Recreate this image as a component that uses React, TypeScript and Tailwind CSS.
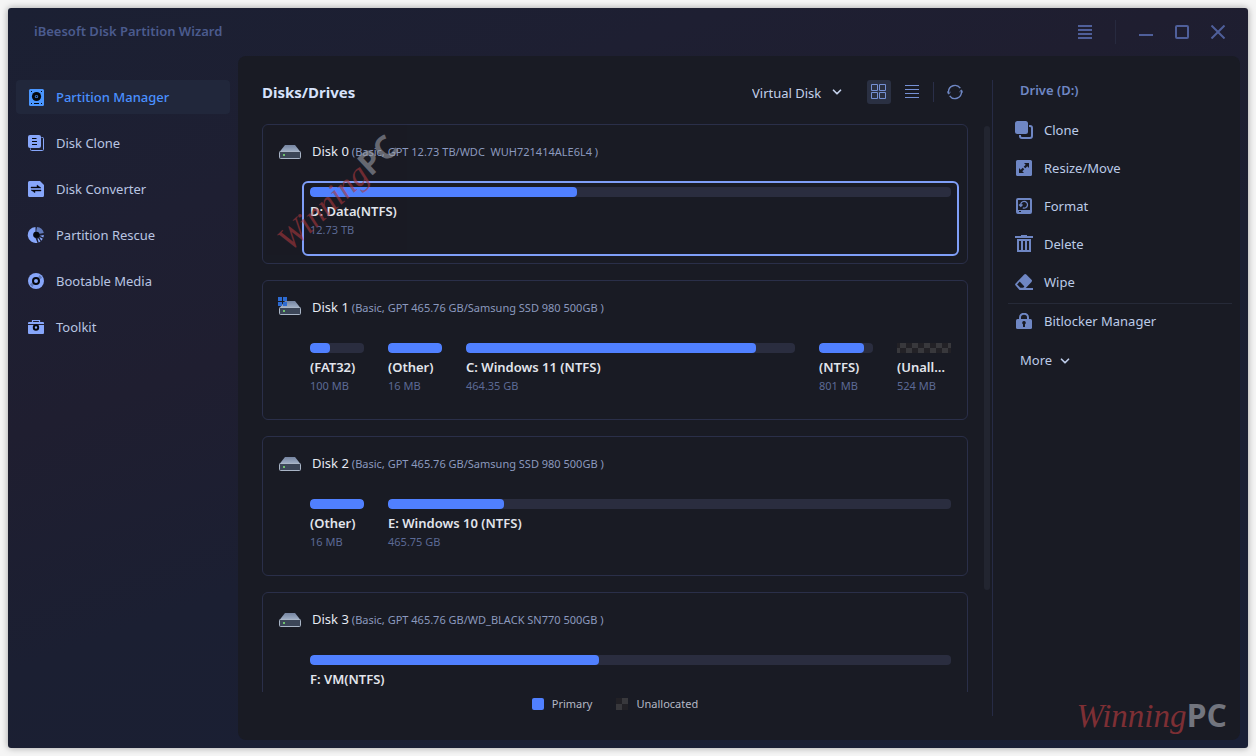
import type { ReactNode } from "react";
import { useState } from "react";
import clsx from "clsx";
import { ChevronDown } from "lucide-react";

type Partition = {
  name: string;
  size: string;
  used: number;
  small?: boolean;
  unallocated?: boolean;
};

type Disk = {
  name: string;
  info: string;
  system?: boolean;
  partitions: Partition[];
};

const DISKS: Disk[] = [
  {
    name: "Disk 0",
    info: "(Basic, GPT 12.73 TB/WDC  WUH721414ALE6L4 )",
    partitions: [{ name: "D: Data(NTFS)", size: "12.73 TB", used: 41.7 }],
  },
  {
    name: "Disk 1",
    info: "(Basic, GPT 465.76 GB/Samsung SSD 980 500GB )",
    system: true,
    partitions: [
      { name: "(FAT32)", size: "100 MB", used: 37.5, small: true },
      { name: "(Other)", size: "16 MB", used: 100, small: true },
      { name: "C: Windows 11 (NTFS)", size: "464.35 GB", used: 88 },
      { name: "(NTFS)", size: "801 MB", used: 83, small: true },
      { name: "(Unallocated)", size: "524 MB", used: 0, small: true, unallocated: true },
    ],
  },
  {
    name: "Disk 2",
    info: "(Basic, GPT 465.76 GB/Samsung SSD 980 500GB )",
    partitions: [
      { name: "(Other)", size: "16 MB", used: 100, small: true },
      { name: "E: Windows 10 (NTFS)", size: "465.75 GB", used: 20.6 },
    ],
  },
  {
    name: "Disk 3",
    info: "(Basic, GPT 465.76 GB/WD_BLACK SN770 500GB )",
    partitions: [{ name: "F: VM(NTFS)", size: "465.76 GB", used: 45.1 }],
  },
];

const CHECKER =
  "bg-[repeating-conic-gradient(#38383c_0_25%,#222126_0_50%)] bg-[length:12px_10px] bg-[position:-3px_0px]";

function Icon({ children, size = 16 }: { children: ReactNode; size?: number }) {
  return (
    <svg
      width={size}
      height={size}
      viewBox={`0 0 ${size} ${size}`}
      fill="none"
      className="shrink-0"
      aria-hidden="true"
    >
      {children}
    </svg>
  );
}

const NAV = [
  {
    label: "Partition Manager",
    icon: (
      <Icon size={18}>
        <rect x="2" y="1" width="15" height="17" rx="1.5" fill="#4a96ff" />
        <circle cx="9.5" cy="8.5" r="4.6" fill="#05070d" />
        <circle cx="9.5" cy="8.5" r="1.6" fill="#4a96ff" />
        <path d="M9.5 7.6v1.8M8.6 8.5h1.8" stroke="#05070d" strokeWidth=".8" />
        <path d="M7 15.5h5" stroke="#05070d" />
        <path d="M4 3h1v1H4zM14 3h1v1h-1zM4 15h1v1H4zM14 15h1v1h-1z" fill="#05070d" />
      </Icon>
    ),
  },
  {
    label: "Disk Clone",
    icon: (
      <Icon size={18}>
        <path d="M14.5 3.5h1a1 1 0 0 1 1 1v11a1 1 0 0 1-1 1h-11a1 1 0 0 1-1-1v-1" stroke="#87a6fa" />
        <rect x="1" y="1" width="13" height="13" rx="2" fill="#87a6fa" />
        <path d="M5 4.5h4.500M5 7.500h5M5 10.500h5" stroke="#05070d" />
      </Icon>
    ),
  },
  {
    label: "Disk Converter",
    icon: (
      <Icon size={18}>
        <path d="M2.500 1H13l4 4v10.500a1.500 1.500 0 0 1-1.500 1.500h-13A1.500 1.500 0 0 1 1 15.500v-13A1.500 1.500 0 0 1 2.500 1Z" fill="#87a6fa" />
        <path d="M4 7h6V5l4 3H4zM14 10H4l4 2.800V11h6z" fill="#05070d" stroke="#05070d" strokeWidth=".4" />
      </Icon>
    ),
  },
  {
    label: "Partition Rescue",
    icon: (
      <Icon size={18}>
        <path d="M8.500 1a8 8 0 1 0 2 15.800L8.500 12a3.200 3.200 0 0 1 0-6.200Z" fill="#87a6fa" />
        <path d="M10 1a8 8 0 0 1 6.800 6L11.500 8 9.200 5.600Z" fill="#6079ba" />
        <path d="m12.800 9.800 4-.8a8 8 0 0 1-.5 2.500Zm-.5 1.200 3.500 1.700a8 8 0 0 1-1.600 2Zm-1 1.200 2.200 3.300-1.800.900-1.200-3.800Z" fill="#87a6fa" />
        <circle cx="9.500" cy="8.800" r="3" fill="#05070d" />
      </Icon>
    ),
  },
  {
    label: "Bootable Media",
    icon: (
      <Icon size={18}>
        <circle cx="9" cy="9" r="8" fill="#87a6fa" />
        <path d="M12.500 3a7 7 0 0 1 2.600 2.800l-2 1.500-2-1.800ZM5.500 15a7 7 0 0 1-2.600-2.800l2-1.500 2 1.800Z" fill="#6079ba" />
        <circle cx="9" cy="9" r="3" fill="#87a6fa" stroke="#05070d" strokeWidth="2" />
      </Icon>
    ),
  },
  {
    label: "Toolkit",
    icon: (
      <Icon size={18}>
        <path d="M5.500 4V2.500h7V4" stroke="#87a6fa" strokeWidth="1.200" />
        <path d="M2 4h14a1 1 0 0 1 1 1v1H1V5a1 1 0 0 1 1-1ZM1 7h16v8a1 1 0 0 1-1 1H2a1 1 0 0 1-1-1Z" fill="#87a6fa" />
        <circle cx="9" cy="9.500" r="2.200" fill="#87a6fa" stroke="#05070d" strokeWidth="2" />
      </Icon>
    ),
  },
];

const ACTIONS = [
  {
    label: "Clone",
    icon: (
      <Icon size={18}>
        <rect x="5" y="5" width="12" height="12" rx="2" stroke="#6f87c4" strokeWidth="2" />
        <rect x="-1" y="-1" width="15" height="15" rx="3" fill="#191b24" />
        <rect width="13" height="13" rx="2.500" fill="#6f87c4" />
      </Icon>
    ),
  },
  {
    label: "Resize/Move",
    icon: (
      <Icon size={18}>
        <rect x="1" y="1" width="16" height="16" rx="1.500" fill="#6f87c4" />
        <path d="M9 4h5v5l-1.700-1.700-2 2-1.600-1.600 2-2ZM9 14H4V9l1.700 1.700 2-2 1.600 1.600-2 2Z" fill="#191b24" />
      </Icon>
    ),
  },
  {
    label: "Format",
    icon: (
      <Icon size={18}>
        <rect x="2" y="2" width="14" height="14" rx="1" stroke="#6f87c4" strokeWidth="2" />
        <path d="M2 13h14v3H2z" fill="#6f87c4" />
        <path d="M4 14h2v1H4z" fill="#191b24" />
        <path d="M5.800 8.500a3.400 3.400 0 1 1 2 2.400M4 7.500l1.800 1.800L7.500 7.500" stroke="#6f87c4" strokeWidth="1.300" />
      </Icon>
    ),
  },
  {
    label: "Delete",
    icon: (
      <Icon size={18}>
        <path d="M0 2h18M6 1h6" stroke="#6f87c4" strokeWidth="2" />
        <path d="M3 5v11h12V5ZM7 5v11M11 5v11" stroke="#6f87c4" strokeWidth="2" />
      </Icon>
    ),
  },
  {
    label: "Wipe",
    icon: (
      <Icon size={18}>
        <path d="M9.200 1.600a1.500 1.500 0 0 1 2.100 0l5.200 5.200a1.500 1.500 0 0 1 0 2.100L10.800 15H18v2H4.500L.6 12.500a1.500 1.500 0 0 1 0-2.100Z" fill="#6f87c4" />
        <path d="m4.700 8.600-2.600 2.800 3.300 3.400h2.800l1.200-1.300Z" fill="#191b24" />
      </Icon>
    ),
  },
];

const LOCK = (
  <Icon size={18}>
    <path d="M5 7V4.500a4 3.800 0 0 1 8 0V7" stroke="#6f87c4" strokeWidth="2" />
    <rect x="1" y="6" width="16" height="10" rx="1.500" fill="#6f87c4" />
    <path d="M9 8a1.800 1.800 0 0 1 1 3.300V14H8v-2.700A1.800 1.800 0 0 1 9 8Z" fill="#191b24" />
  </Icon>
);

function DriveIcon({ system }: { system?: boolean }) {
  return (
    <svg width="24" height="22" viewBox="0 0 24 22" className="shrink-0" aria-hidden="true">
      <defs>
        <linearGradient id="lid" x1="0" y1="0" x2="0" y2="1">
          <stop offset="0" stopColor="#7584a0" />
          <stop offset="1" stopColor="#a3b2c8" />
        </linearGradient>
      </defs>
      <path d="M7 4h10l5.500 7h-21Z" fill="url(#lid)" />
      <rect x="1.500" y="10.500" width="21" height="7" rx="1" fill="#3c4658" stroke="#a9b5c6" />
      <path d="M5 13h2v2H5z" fill="#6fc06f" />
      {system && (
        <path d="M0 0h4v4H0zM5 0h4v4H5zM0 5h4v4H0zM5 5h4v4H5z" fill="#2d6bd2" />
      )}
    </svg>
  );
}

function PartitionBlock({
  part,
  selected,
  onSelect,
}: {
  part: Partition;
  selected: boolean;
  onSelect: () => void;
}) {
  return (
    <button
      onClick={onSelect}
      className={clsx(
        "h-[75px] rounded-md border-2 px-1.5 pt-1 flex flex-col text-left min-w-0",
        part.small ? "w-[70px] shrink-0" : "flex-1",
        selected ? "border-[#7f9ff8]" : "border-transparent"
      )}
    >
      {part.unallocated ? (
        <span className={clsx("block w-full h-2.5 shrink-0", CHECKER)} />
      ) : (
        <span className="block w-full h-2.5 shrink-0 rounded-[4px] bg-[#2a2d3f] overflow-hidden">
          <span
            className="block h-full rounded-[4px] bg-[#5080ff]"
            style={{ width: `${part.used}%` }}
          />
        </span>
      )}
      <span className="w-full mt-1 text-[13px] leading-5 font-semibold text-[#e2e5ec] truncate">
        {part.name}
      </span>
      <span className="text-[11px] leading-[18px] text-[#5c6a95]">{part.size}</span>
    </button>
  );
}

function DiskCard({
  disk,
  selected,
  onSelect,
}: {
  disk: Disk;
  selected: string;
  onSelect: (name: string) => void;
}) {
  return (
    <article className="h-[140px] shrink-0 rounded-md border border-[#2a2f49] pl-[39px] pr-2">
      <header className="-ml-6 mb-0.5 h-[54px] flex items-center">
        <DriveIcon system={disk.system} />
        <h2 className="ml-2.5 text-[13px] text-[#e6eaf3]">{disk.name}</h2>
        <p className="ml-[3px] text-[11px] text-[#8b99be] whitespace-pre">{disk.info}</p>
      </header>
      <div className="flex gap-2">
        {disk.partitions.map((p) => (
          <PartitionBlock
            key={p.name}
            part={p}
            selected={selected === p.name}
            onSelect={() => onSelect(p.name)}
          />
        ))}
      </div>
    </article>
  );
}

function Watermark({ className }: { className?: string }) {
  return (
    <p
      className={clsx(
        "pointer-events-none absolute flex items-baseline whitespace-nowrap leading-10",
        className
      )}
    >
      <span className="font-['Liberation_Serif'] italic text-[33px] text-[#a8383c]">Winning</span>
      <span className="font-['Open_Sans'] font-bold text-[32px] text-[#989ba4]">PC</span>
    </p>
  );
}

function TitleBar() {
  return (
    <header className="h-12 shrink-0 flex items-center pl-[26px] pr-[19px] text-[#4b5b8e]">
      <h1 className="flex-1 text-[13px] font-semibold">iBeesoft Disk Partition Wizard</h1>
      <button aria-label="Menu" className="p-1">
        <Icon size={14}>
          <path d="M0 1h14M0 5h14M0 9h14M0 13h14" stroke="#4f5f9a" strokeWidth="2" />
        </Icon>
      </button>
      <span className="w-px h-6 mx-[19px] bg-[#272a3f]" />
      <div className="flex gap-3.5">
        <button aria-label="Minimize" className="p-1">
          <Icon size={14}>
            <path d="M0 10h14" stroke="#4f5f9a" strokeWidth="2" />
          </Icon>
        </button>
        <button aria-label="Maximize" className="p-1">
          <Icon size={14}>
            <rect x="1" y="1" width="12" height="12" rx="1" stroke="#4f5f9a" strokeWidth="2" />
          </Icon>
        </button>
        <button aria-label="Close" className="p-1">
          <Icon size={14}>
            <path d="m.5.5 13 13M13.500.5l-13 13" stroke="#4f5f9a" strokeWidth="2" />
          </Icon>
        </button>
      </div>
    </header>
  );
}

function Toolbar() {
  return (
    <header className="h-6 pr-[25px] flex items-center gap-[9px]">
      <h2 className="flex-1 text-[15px] font-bold text-[#d6e2fb]">Disks/Drives</h2>
      <div className="relative mr-3.5 text-[#c3d0ea]">
        <select
          aria-label="Disk type"
          className="appearance-none bg-transparent pr-[22px] text-[13px] outline-none"
        >
          <option>Virtual Disk</option>
        </select>
        <ChevronDown
          size={14}
          strokeWidth={3}
          className="absolute right-0 top-1/2 -translate-y-1/2 pointer-events-none"
        />
      </div>
      <button
        aria-label="Grid view"
        className="w-6 h-6 rounded-[3px] bg-[#2a3042] flex items-center justify-center"
      >
        <Icon size={16}>
          <path d="M.5.5h6v6h-6zM8.500.5h6v6h-6zM.5 8.500h6v6h-6zM8.500 8.500h6v6h-6z" stroke="#7590d4" />
        </Icon>
      </button>
      <button aria-label="List view" className="w-6 h-6 flex items-center justify-center">
        <Icon size={14}>
          <path d="M0 .5h14M0 4.500h14M0 8.500h14M0 12.500h14" stroke="#7590d4" />
        </Icon>
      </button>
      <span className="w-px h-5 bg-[#2a2f49]" />
      <button aria-label="Refresh" className="w-6 h-6 flex items-center justify-center">
        <Icon size={16}>
          <path d="M1.500 9.500V8a6.500 6.500 0 0 1 11.800-3.800M14.500 6.500V8a6.500 6.500 0 0 1-11.800 3.800" stroke="#6f87c4" strokeWidth="1.400" />
          <path d="m.5 7.500 1 2.500 2-1.800M15.500 8.500l-1-2.500-2 1.800" stroke="#6f87c4" />
        </Icon>
      </button>
    </header>
  );
}

export default function App() {
  const [page, setPage] = useState("Partition Manager");
  const [selected, setSelected] = useState("D: Data(NTFS)");

  return (
    <div className="h-screen p-2 bg-[#f5f5f5] font-['Noto_Sans',sans-serif]">
      <div className="relative h-full flex flex-col rounded-[3px] overflow-hidden shadow-[0_0_7px_rgba(0,0,0,0.35)] bg-[linear-gradient(160deg,#1b2033_0%,#1e1f32_22%,#1f1e30_36%,#1b1f32_56%,#191f35_100%)]">
        <TitleBar />
        <div className="flex-1 min-h-0 flex pr-2 pb-2">
          <nav className="w-[230px] shrink-0 px-2 pt-6 flex flex-col gap-3">
            {NAV.map((n) => (
              <button
                key={n.label}
                onClick={() => setPage(n.label)}
                className={clsx(
                  "h-[34px] pl-[11px] flex items-center gap-[11px] rounded-[4px] text-[13px]",
                  page === n.label
                    ? "bg-[#21273b] text-[#4a90ff] font-medium"
                    : "text-[#b9c5e2]"
                )}
              >
                {n.icon}
                <span className="pt-px">{n.label}</span>
              </button>
            ))}
          </nav>

          <main className="flex-1 min-w-0 flex rounded-lg bg-[#191b24]">
            <section className="flex-1 min-w-0 py-6 pl-6 flex flex-col">
              <Toolbar />
              <div className="flex-1 min-h-0 mt-5 flex">
                <div className="relative flex-1 min-w-0 flex flex-col gap-4 overflow-hidden">
                  {DISKS.map((d) => (
                    <DiskCard
                      key={d.name}
                      disk={d}
                      selected={selected}
                      onSelect={setSelected}
                    />
                  ))}
                  <Watermark className="left-0 top-12 -rotate-[43deg] opacity-60" />
                </div>
                <div className="w-1.5 ml-4 mr-0.5 pt-0.5">
                  <div className="h-[82%] rounded-full bg-[#222530]" />
                </div>
              </div>
              <footer className="h-6 pr-6 flex items-center justify-center gap-6 text-[11px] text-[#b4b8c4]">
                <span className="flex items-center gap-2">
                  <i className="size-3 rounded-[2px] bg-[#5080ff]" />
                  Primary
                </span>
                <span className="flex items-center gap-2">
                  <i className="size-3 bg-[repeating-conic-gradient(#38383c_0_25%,#222126_0_50%)] bg-[length:12px_12px]" />
                  Unallocated
                </span>
              </footer>
            </section>

            <aside className="w-[248px] shrink-0 my-6 border-l border-[#262b45] text-[13px] text-[#bccbe8]">
              <h2 className="pl-[27px] h-5 leading-5 font-semibold text-[#6f87c4]">Drive (D:)</h2>
              <div className="mt-[11px] flex flex-col">
                {ACTIONS.map((a) => (
                  <button key={a.label} className="h-[38px] pl-[22px] flex items-center gap-[11px]">
                    {a.icon}
                    <span className="pt-px">{a.label}</span>
                  </button>
                ))}
              </div>
              <div className="mx-[15px] mr-2 mt-0.5 border-t border-[#262a38]" />
              <button className="w-full h-9 pl-[22px] flex items-center gap-[11px]">
                {LOCK}
                Bitlocker Manager
              </button>
              <button className="mt-0.5 h-[38px] pl-[27px] flex items-center gap-1.5">
                More
                <ChevronDown size={14} strokeWidth={3} />
              </button>
            </aside>
          </main>
        </div>
        <Watermark className="right-[21px] bottom-3 opacity-70" />
      </div>
    </div>
  );
}
